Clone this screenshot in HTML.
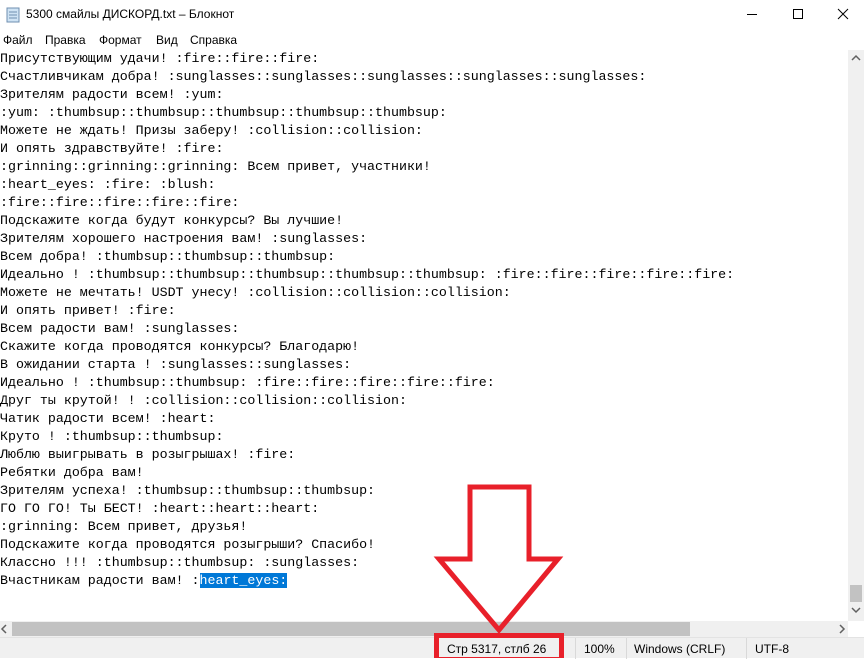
<!DOCTYPE html>
<html><head><meta charset="utf-8"><style>
*{margin:0;padding:0;box-sizing:border-box}
body{width:864px;height:658px;overflow:hidden;background:#fff;position:relative;font-family:"Segoe UI","Liberation Sans",sans-serif}
.title{position:absolute;left:0;top:0;width:864px;height:30px;background:#fff;font-size:12px;color:#000}
.title span{position:absolute;left:26px;top:7px}
.menu{position:absolute;left:0;top:30px;height:20px;font-size:12px}
.menu span{position:absolute;top:3px;white-space:nowrap}
.txt{position:absolute;left:0;top:50px;font-family:"Liberation Mono",monospace;font-size:13.3px;line-height:18px;white-space:pre;color:#000}
.sel{background:#0078d7;color:#fff}
.vs{position:absolute;left:848px;top:50px;width:16px;height:571px;background:#f0f0f0}
.hs{position:absolute;left:0;top:621px;width:848px;height:16px;background:#f0f0f0}
.status{position:absolute;left:0;top:637px;width:864px;height:21px;background:#f0f0f0;border-top:1px solid #e3e3e3;font-size:12px}
.status span{position:absolute;top:4px}
.sep{position:absolute;top:0;width:1px;height:21px;background:#d9d9d9}
</style></head><body>
<div class="title">
<svg style="position:absolute;left:6px;top:7px" width="14" height="16"><rect x="1" y="1" width="12" height="14" fill="#cfe3f4" stroke="#6f8fb0"/><line x1="3" y1="5" x2="11" y2="5" stroke="#6f8fb0"/><line x1="3" y1="8" x2="11" y2="8" stroke="#6f8fb0"/><line x1="3" y1="11" x2="11" y2="11" stroke="#6f8fb0"/></svg>
<span>5300 смайлы ДИСКОРД.txt – Блокнот</span>
<svg style="position:absolute;left:740px;top:8px" width="120" height="14"><line x1="7" y1="6.5" x2="17" y2="6.5" stroke="#000"/><rect x="53.5" y="1.5" width="9" height="9" fill="none" stroke="#000"/><path d="M98 1 L108 11 M108 1 L98 11" stroke="#000"/></svg>
</div>
<div class="menu"><span style="left:3px">Файл</span><span style="left:45px">Правка</span><span style="left:99px">Формат</span><span style="left:156px">Вид</span><span style="left:190px">Справка</span></div>
<div class="txt">Присутствующим удачи! :fire::fire::fire:
Счастливчикам добра! :sunglasses::sunglasses::sunglasses::sunglasses::sunglasses:
Зрителям радости всем! :yum:
:yum: :thumbsup::thumbsup::thumbsup::thumbsup::thumbsup:
Можете не ждать! Призы заберу! :collision::collision:
И опять здравствуйте! :fire:
:grinning::grinning::grinning: Всем привет, участники!
:heart_eyes: :fire: :blush:
:fire::fire::fire::fire::fire:
Подскажите когда будут конкурсы? Вы лучшие!
Зрителям хорошего настроения вам! :sunglasses:
Всем добра! :thumbsup::thumbsup::thumbsup:
Идеально ! :thumbsup::thumbsup::thumbsup::thumbsup::thumbsup: :fire::fire::fire::fire::fire:
Можете не мечтать! USDT унесу! :collision::collision::collision:
И опять привет! :fire:
Всем радости вам! :sunglasses:
Скажите когда проводятся конкурсы? Благодарю!
В ожидании старта ! :sunglasses::sunglasses:
Идеально ! :thumbsup::thumbsup: :fire::fire::fire::fire::fire:
Друг ты крутой! ! :collision::collision::collision:
Чатик радости всем! :heart:
Круто ! :thumbsup::thumbsup:
Люблю выигрывать в розыгрышах! :fire:
Ребятки добра вам!
Зрителям успеха! :thumbsup::thumbsup::thumbsup:
ГО ГО ГО! Ты БЕСТ! :heart::heart::heart:
:grinning: Всем привет, друзья!
Подскажите когда проводятся розыгрыши? Спасибо!
Классно !!! :thumbsup::thumbsup: :sunglasses:
Вчастникам радости вам! :<span class="sel">heart_eyes:</span></div>
<div class="vs"><svg width="16" height="571"><path d="M4 10 L8 6 L12 10" fill="none" stroke="#606060" stroke-width="1.5"/><rect x="2" y="535" width="12" height="17" fill="#c2c2c2"/><path d="M4 558 L8 562 L12 558" fill="none" stroke="#606060" stroke-width="1.5"/></svg></div>
<div class="hs"><svg width="848" height="16"><path d="M6 4 L2 8 L6 12" fill="none" stroke="#606060" stroke-width="1.5"/><rect x="12" y="1" width="678" height="14" fill="#c2c2c2"/><path d="M840 4 L844 8 L840 12" fill="none" stroke="#606060" stroke-width="1.5"/></svg></div>
<div class="status">
<div class="sep" style="left:575px"></div><div class="sep" style="left:626px"></div><div class="sep" style="left:746px"></div>
<span style="left:447px">Стр 5317, стлб 26</span><span style="left:584px">100%</span><span style="left:634px">Windows (CRLF)</span><span style="left:755px">UTF-8</span>
</div>
<svg style="position:absolute;left:0;top:0" width="864" height="658">
<polygon points="470,487 529,487 529,559 558,559 499,630 439,559 470,559" fill="none" stroke="#e8202a" stroke-width="5" stroke-linejoin="miter"/>
<rect x="436.5" y="635.5" width="125" height="24" fill="none" stroke="#e8202a" stroke-width="5"/>
</svg>
</body></html>
